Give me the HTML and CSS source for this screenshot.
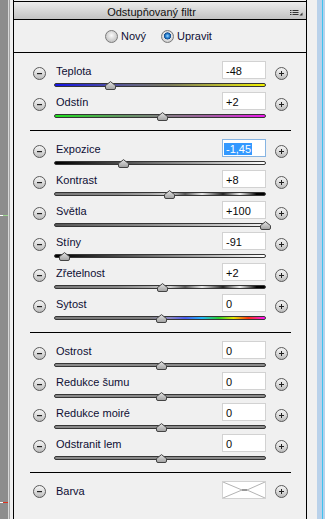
FILE: index.html
```html
<!DOCTYPE html>
<html lang="cs">
<head>
<meta charset="utf-8">
<title>Odstupňovaný filtr</title>
<link rel="stylesheet" href="styles.css">
</head>
<body>
<svg class="defs" width="0" height="0" aria-hidden="true">
  <defs>
    <linearGradient id="gBtn" x1="0" y1="0" x2="0" y2="1">
      <stop offset="0" stop-color="#f6f6f6"/>
      <stop offset="0.5" stop-color="#dcdcdc"/>
      <stop offset="1" stop-color="#b8b8b8"/>
    </linearGradient>
    <linearGradient id="gThumb" x1="0" y1="0" x2="0" y2="1">
      <stop offset="0" stop-color="#e4e4e4"/>
      <stop offset="1" stop-color="#a0a0a0"/>
    </linearGradient>
    <symbol id="minus" viewBox="0 0 13 13">
      <circle cx="6.5" cy="6.5" r="6" fill="url(#gBtn)" stroke="#5a5a5a"/>
      <rect x="4" y="6" width="5" height="1.2" fill="#222"/>
    </symbol>
    <symbol id="plus" viewBox="0 0 13 13">
      <circle cx="6.5" cy="6.5" r="6" fill="url(#gBtn)" stroke="#5a5a5a"/>
      <rect x="4" y="6" width="5" height="1" fill="#222"/>
      <rect x="6" y="4" width="1" height="5" fill="#222"/>
    </symbol>
    <symbol id="thumb" viewBox="0 0 11 9">
      <path d="M5.5 0.6 L10.5 4.6 L10.5 7 Q10.5 8.5 9 8.5 L2 8.5 Q0.5 8.5 0.5 7 L0.5 4.6 Z" fill="url(#gThumb)" stroke="#444"/>
    </symbol>
  </defs>
</svg>
<div class="app">
  <div class="side-left"></div>
  <div class="panel">
    <div class="header">
      <span class="title">Odstupňovaný filtr</span>
      <svg class="menu" width="17" height="17" viewBox="0 0 17 17">
        <rect x="1" y="8" width="1.5" height="1" fill="#333"/>
        <rect x="3.5" y="8" width="6" height="1" fill="#333"/>
        <rect x="1" y="10" width="1.5" height="1" fill="#333"/>
        <rect x="3.5" y="10" width="6" height="1" fill="#333"/>
        <rect x="1" y="12" width="1.5" height="1" fill="#333"/>
        <rect x="3.5" y="12" width="6" height="1" fill="#333"/>
        <polygon points="10.5,13.5 13.5,13.5 13.5,10.5" fill="#333"/>
      </svg>
    </div>
    <div class="mode">
      <span class="radio"><span class="rb"></span>Nový</span>
      <span class="radio second"><span class="rb on"></span>Upravit</span>
    </div>

    <div class="section">
      <div class="row">
        <svg class="btn"><use href="#minus"/></svg>
        <div class="main">
          <div class="top"><span class="label">Teplota</span><span class="value">-48</span></div>
          <div class="track t-temp"><svg class="thumb" style="left:50px"><use href="#thumb"/></svg></div>
        </div>
        <svg class="btn plus"><use href="#plus"/></svg>
      </div>
      <div class="row">
        <svg class="btn"><use href="#minus"/></svg>
        <div class="main">
          <div class="top"><span class="label">Odstín</span><span class="value">+2</span></div>
          <div class="track t-tint"><svg class="thumb" style="left:102px"><use href="#thumb"/></svg></div>
        </div>
        <svg class="btn plus"><use href="#plus"/></svg>
      </div>
    </div>

    <div class="section">
      <div class="row">
        <svg class="btn"><use href="#minus"/></svg>
        <div class="main">
          <div class="top"><span class="label">Expozice</span><span class="value focus"><span class="sel">-1,45</span></span></div>
          <div class="track t-exp"><svg class="thumb" style="left:63px"><use href="#thumb"/></svg></div>
        </div>
        <svg class="btn plus"><use href="#plus"/></svg>
      </div>
      <div class="row">
        <svg class="btn"><use href="#minus"/></svg>
        <div class="main">
          <div class="top"><span class="label">Kontrast</span><span class="value">+8</span></div>
          <div class="track t-con"><svg class="thumb" style="left:109px"><use href="#thumb"/></svg></div>
        </div>
        <svg class="btn plus"><use href="#plus"/></svg>
      </div>
      <div class="row">
        <svg class="btn"><use href="#minus"/></svg>
        <div class="main">
          <div class="top"><span class="label">Světla</span><span class="value">+100</span></div>
          <div class="track t-hi"><svg class="thumb" style="left:205px"><use href="#thumb"/></svg></div>
        </div>
        <svg class="btn plus"><use href="#plus"/></svg>
      </div>
      <div class="row">
        <svg class="btn"><use href="#minus"/></svg>
        <div class="main">
          <div class="top"><span class="label">Stíny</span><span class="value">-91</span></div>
          <div class="track t-sh"><svg class="thumb" style="left:4px"><use href="#thumb"/></svg></div>
        </div>
        <svg class="btn plus"><use href="#plus"/></svg>
      </div>
      <div class="row">
        <svg class="btn"><use href="#minus"/></svg>
        <div class="main">
          <div class="top"><span class="label">Zřetelnost</span><span class="value">+2</span></div>
          <div class="track t-con"><svg class="thumb" style="left:102px"><use href="#thumb"/></svg></div>
        </div>
        <svg class="btn plus"><use href="#plus"/></svg>
      </div>
      <div class="row">
        <svg class="btn"><use href="#minus"/></svg>
        <div class="main">
          <div class="top"><span class="label">Sytost</span><span class="value">0</span></div>
          <div class="track t-sat"><svg class="thumb" style="left:101px"><use href="#thumb"/></svg></div>
        </div>
        <svg class="btn plus"><use href="#plus"/></svg>
      </div>
    </div>

    <div class="section">
      <div class="row">
        <svg class="btn"><use href="#minus"/></svg>
        <div class="main">
          <div class="top"><span class="label">Ostrost</span><span class="value">0</span></div>
          <div class="track"><svg class="thumb" style="left:101px"><use href="#thumb"/></svg></div>
        </div>
        <svg class="btn plus"><use href="#plus"/></svg>
      </div>
      <div class="row">
        <svg class="btn"><use href="#minus"/></svg>
        <div class="main">
          <div class="top"><span class="label">Redukce šumu</span><span class="value">0</span></div>
          <div class="track"><svg class="thumb" style="left:101px"><use href="#thumb"/></svg></div>
        </div>
        <svg class="btn plus"><use href="#plus"/></svg>
      </div>
      <div class="row">
        <svg class="btn"><use href="#minus"/></svg>
        <div class="main">
          <div class="top"><span class="label">Redukce moiré</span><span class="value">0</span></div>
          <div class="track"><svg class="thumb" style="left:101px"><use href="#thumb"/></svg></div>
        </div>
        <svg class="btn plus"><use href="#plus"/></svg>
      </div>
      <div class="row">
        <svg class="btn"><use href="#minus"/></svg>
        <div class="main">
          <div class="top"><span class="label">Odstranit lem</span><span class="value">0</span></div>
          <div class="track"><svg class="thumb" style="left:101px"><use href="#thumb"/></svg></div>
        </div>
        <svg class="btn plus"><use href="#plus"/></svg>
      </div>
    </div>

    <div class="section last">
      <div class="row color-row">
        <svg class="btn"><use href="#minus"/></svg>
        <div class="main">
          <div class="top"><span class="label">Barva</span>
            <span class="swatch">
              <svg width="42" height="16" viewBox="0 0 42 16">
                <path d="M0 0 L19 8 L0 16 M42 0 L24 8 L42 16" stroke="#a0a0a0" fill="none" stroke-width="0.8"/>
                <path d="M19 8 L24 8" stroke="#555" stroke-width="1.2"/>
              </svg>
            </span>
          </div>
        </div>
        <svg class="btn plus"><use href="#plus"/></svg>
      </div>
    </div>
  </div>
  <div class="side-right"></div>
</div>
</body>
</html>
```
FILE: styles.css
```css
* { box-sizing: border-box; }
html, body { margin: 0; padding: 0; }
body {
  width: 325px;
  height: 519px;
  overflow: hidden;
  background: #f0f0f0;
  font-family: "Liberation Sans", Arial, sans-serif;
  font-size: 11px;
  color: #0e0e34;
}
.defs { position: absolute; width: 0; height: 0; }

.app { display: flex; height: 519px; }

.side-left {
  width: 13px;
  flex: none;
  background:
    linear-gradient(to right, #ffffff 0 3px, #9bd58f 3px 8px) 0 215px / 8px 1px no-repeat,
    linear-gradient(to right, #ffffff 0 3px, #e0301c 3px 8px) 0 502px / 8px 1px no-repeat,
    linear-gradient(to right, #8d8d8d 0 8px, #d8d8d8 8px 9px, #a4a4a4 9px 10px, #efefef 10px 13px);
}
.side-right {
  flex: 1;
  background: linear-gradient(to right, #f0f0f0 0 10px, #b9d1ea 10px 15px, #3fc2ee 15px 16px, #b9d1ea 16px);
}

.panel {
  width: 294px;
  flex: none;
  border-left: 1px solid #000;
  border-right: 1px solid #000;
  padding-top: 1px;
  display: flex;
  flex-direction: column;
}

.header {
  height: 19px;
  border-top: 1px solid #000;
  border-bottom: 1px solid #000;
  background: linear-gradient(#ececec, #c2c2c2);
  display: flex;
  align-items: flex-start;
}
.title {
  flex: 1;
  text-align: center;
  padding-top: 4px;
  color: #111;
}
.menu { flex: none; }

.mode {
  height: 34px;
  border-bottom: 1px solid #000;
  display: flex;
  align-items: center;
  padding-left: 91px;
}
.radio { display: flex; align-items: center; gap: 3px; }
.radio.second { margin-left: 15px; }
.rb {
  width: 13px;
  height: 13px;
  border-radius: 50%;
  border: 1px solid #7a7a7a;
  background: radial-gradient(circle at 50% 40%, #fbfbfb 0, #e0e0e0 3px, #c8c8c8 6px);
}
.rb.on {
  background: radial-gradient(circle at 50% 45%, #a6d8ff 0, #2f8ad8 1.8px, #12498a 3.3px, #e6e6e6 3.8px, #cccccc 6px);
}

.section {
  margin: 0 15px 0 16px;
  padding: 8px 0 7px;
  border-bottom: 1px solid #000;
}
.section.last { border-bottom: none; }

.row {
  display: flex;
  height: 31px;
  padding-left: 3px;
}
.btn {
  width: 13px;
  height: 13px;
  flex: none;
  margin-top: 6px;
}
.btn.plus { margin-left: 9px; }
.color-row .btn { margin-top: 4px; }

.main { width: 212px; flex: none; margin-left: 8px; }
.top {
  display: flex;
  justify-content: space-between;
  height: 18px;
}
.label {
  padding-left: 2px;
  padding-top: 2px;
  line-height: 16px;
}
.value {
  width: 44px;
  height: 18px;
  background: #fff;
  border: 1px solid #d2d2d2;
  padding: 2px 0 0 3px;
  line-height: 14px;
  color: #0a0a0a;
}
.value.focus { border-color: #86b4e2; }
.sel {
  display: inline-block;
  margin-left: -2px;
  padding: 0 1px 0 2px;
  height: 12px;
  line-height: 12px;
  background: #3399ff;
  color: #fff;
}
.swatch {
  width: 44px;
  height: 18px;
  background: #fff;
  border: 1px solid #d2d2d2;
  display: flex;
}

.track {
  position: relative;
  margin-top: 4px;
  height: 4px;
  border: 1px solid #363636;
  border-radius: 2px;
  background: #8a8a8a;
}
.thumb {
  position: absolute;
  top: -3px;
  width: 11px;
  height: 9px;
}
.t-temp { background: linear-gradient(to right, #1414e6, #5c5c8c 35%, #7a7a5a 55%, #b8b834 78%, #f2f200); }
.t-tint { background: linear-gradient(to right, #1fe01f, #5e9a5e 30%, #808080 50%, #a060a0 72%, #ee1aee); }
.t-exp { background: linear-gradient(to right, #000, #555 35%, #aaa 70%, #fff); }
.t-sh { background: linear-gradient(to right, #000, #555 35%, #aaa 70%, #fff); }
.t-hi { background: linear-gradient(to right, #555, #888 40%, #c8c8c8 80%, #f4f4f4); }
.t-con {
  background: linear-gradient(to right, #7a7a7a 0%, #8a8a8a 30%, #a8a8a8 45%, #d0d0d0 55%, #555 62%, #e8e8e8 70%, #222 80%, #f0f0f0 88%, #000 96%);
}
.t-sat {
  background: linear-gradient(to right, #7c7c7c 0%, #808080 45%, #8a86c8 55%, #4a5cf0 62%, #20b8ff 70%, #28d228 78%, #e8e800 85%, #ff3010 92%, #ff10ff 100%);
}
```
